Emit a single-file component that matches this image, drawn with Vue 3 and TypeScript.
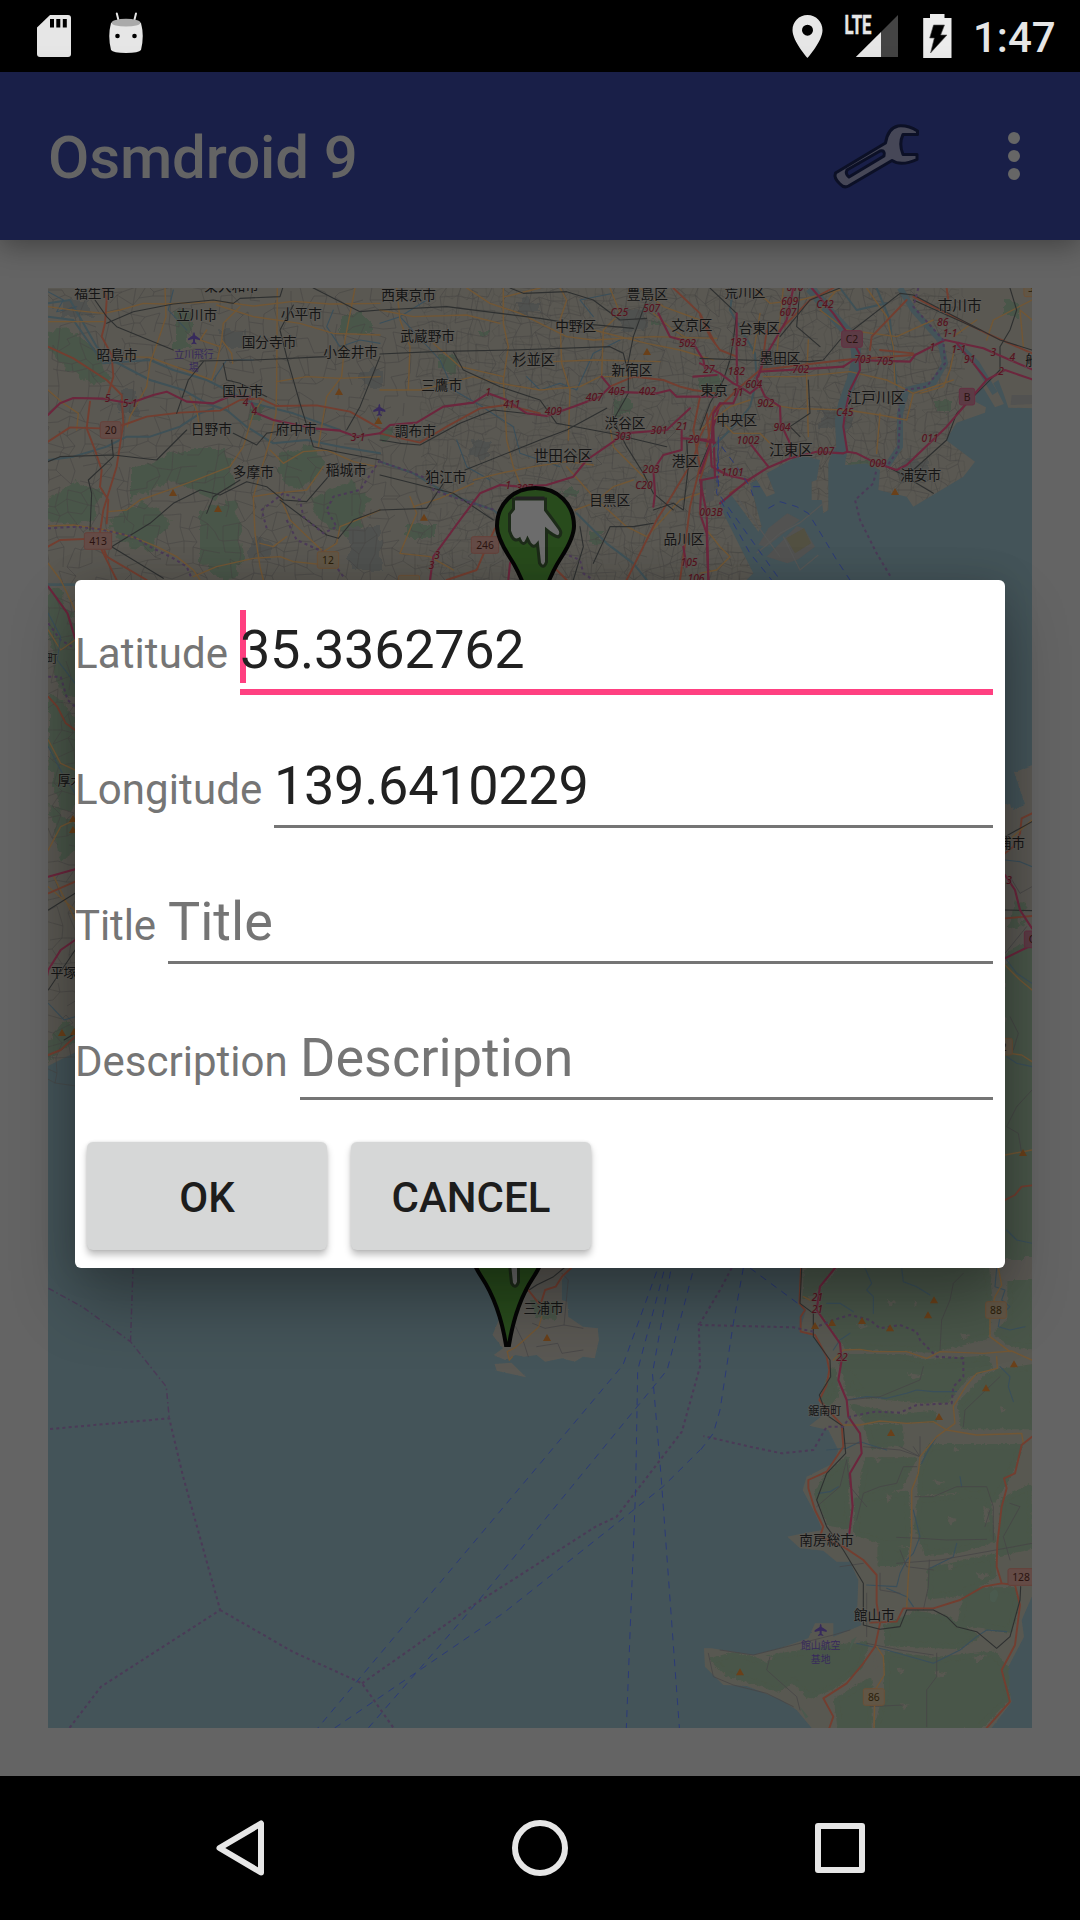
<script setup lang="ts">
import { ref } from 'vue'

type Label = [string, number, number, number?]
type Shield = [string, number, number, number, string]
type Road = [string, string]
interface Tile {
  t: string
  roads: Road[]
  places: Label[]
  fields: Label[]
  refs: Label[]
  shields: Shield[]
  peaks: [number, number][]
  planes: [number, number][]
}

interface Field { id: string; label: string; value: string; hint: string; active: boolean }

const fields = ref<Field[]>([
  { id: 'lat', label: 'Latitude', value: '35.3362762', hint: '', active: true },
  { id: 'lon', label: 'Longitude', value: '139.6410229', hint: '', active: false },
  { id: 'title', label: 'Title', value: '', hint: 'Title', active: false },
  { id: 'desc', label: 'Description', value: '', hint: 'Description', active: false },
])

// Deterministic mesh of side streets for the built-up area
function mesh(x0: number, y0: number, x1: number, y1: number, step: number, seed: number): string {
  let s = seed
  const rnd = () => {
    s = (s * 16807) % 2147483647
    return s / 2147483647
  }
  const cols = Math.ceil((x1 - x0) / step) + 1
  const rows = Math.ceil((y1 - y0) / step) + 1
  const p: [number, number][][] = []
  for (let r = 0; r < rows; r++) {
    p.push([])
    for (let c = 0; c < cols; c++) {
      p[r].push([
        Math.round(x0 + c * step + (rnd() - 0.5) * step * 0.9),
        Math.round(y0 + r * step + (rnd() - 0.5) * step * 0.9),
      ])
    }
  }
  let d = ''
  for (let r = 0; r < rows; r++) {
    for (let c = 0; c < cols; c++) {
      const [x, y] = p[r][c]
      if (c + 1 < cols && rnd() < 0.68) d += `M${x},${y}L${p[r][c + 1][0]},${p[r][c + 1][1]}`
      if (r + 1 < rows && rnd() < 0.68) d += `M${x},${y}L${p[r + 1][c][0]},${p[r + 1][c][1]}`
    }
  }
  return d
}
const streets = mesh(48, 288, 960, 600, 12, 4711)
const streetsFine = mesh(420, 288, 960, 600, 8, 977)
const streetsWest = mesh(44, 600, 84, 1070, 13, 31)

const tiles: Tile[] = [
  {
    t: 'translate(40 280) scale(.33333)',
    roads: [
      ['river', 'M24,70L90,60L130,130L170,200L215,240L330,300L430,330L500,370L560,390L620,440L700,490L800,480L900,500L1020,520'],
      ['river', 'M24,540L100,530L200,500L260,470L330,470L420,440L480,400L520,385M24,110L100,120L190,250L330,240L400,270L500,300L640,370L760,400L900,450'],
      ['river2', 'M24,35L70,60L50,95L110,80M400,30L385,90L440,150M520,300L560,240L640,240M880,90L860,140L900,200L960,180L1020,190'],
      ['sec', 'M24,80L110,92L190,100L240,90L310,70L370,72L540,65L640,78L760,64L870,72L1020,70'],
      ['sec', 'M24,125L190,125M375,24L378,110L355,180L330,250L320,320L270,410L262,440'],
      ['sec', 'M530,75L640,110L780,130L880,160L1020,165M600,80L550,130L545,180L575,220L578,250M545,180L530,250L515,300L330,232L250,230'],
      ['sec', 'M712,24L710,310L708,400L690,480L640,650L645,760L660,860L670,900M945,24L915,180L905,290L860,350L835,500'],
      ['sec', 'M710,305L800,290L900,295L1020,290M500,150L480,180L540,200M450,350L470,390L480,450'],
      ['sec', 'M24,330L70,370L115,400L110,450M205,695L260,690L300,660L400,625L480,595L570,560L610,500L640,400L670,355'],
      ['sec', 'M24,738L100,735L200,750L290,775L350,800L410,830L460,870L480,900M460,890L530,860L640,835L720,830L760,845L860,855'],
      ['sec', 'M690,510L730,550L790,515L860,510L940,545L1010,560M640,650L700,640L800,630L850,560M720,650L750,720L850,815L890,790L900,740L950,720L1020,690M660,790L700,800L740,770'],
      ['trunk', 'M24,200L100,235L200,300L245,345L250,430L230,560L190,690L175,790L230,900M192,24L200,60L195,130L185,170L215,225L220,290L205,340'],
      ['trunk', 'M24,485L90,442L180,445L250,435L320,410L420,398L540,392L600,360L660,355L710,378L830,376L930,395L1020,445'],
      ['trunk', 'M150,365L140,445L165,510L185,570L180,620L205,660L200,730M24,800L60,780L180,775L200,830L320,900'],
      ['rail', 'M165,60L200,110L230,140L400,210M200,130L280,95L400,72L520,60L580,70L600,55L720,50L728,24M760,75L720,150L740,230L780,370L820,500L890,515L1020,540M480,243L640,240L860,230M24,545L60,530L220,525L350,540L440,450'],
      ['rail', 'M150,750L155,640L145,600L220,530L215,480M215,800L330,730L400,670L480,630L540,645L620,605L680,620L730,660L800,665L865,590M500,700L520,650L600,600M215,800L370,895M550,250L560,300L600,310L680,350M820,24L960,95L1020,90M1020,230L960,380L920,450'],
      ['rail', 'M490,245L445,300L410,400M720,660L860,765L895,775L940,720L1020,690M580,460L650,495L680,460L740,450'],
      ['mot', 'M24,405L60,370L100,354L190,356L270,370L340,345L380,335L440,365L520,370L570,348L630,350M635,370L650,400L700,420L820,445L900,452L950,470L1020,460'],
      ['bound', 'M24,745L110,740L180,748L280,770L330,800L400,835L440,860L455,895M680,745L665,690L730,640L780,660L790,710L850,760L890,740L860,690L880,650L960,630L1020,540M740,720L770,780L860,820L910,890'],
    ],
    places: [['福生市', 164, 53], ['東大和市', 575, 32], ['立川市', 470, 120], ['小平市', 784, 117], ['国分寺市', 687, 200], ['小金井市', 932, 231], ['昭島市', 231, 239], ['国立市', 608, 349], ['日野市', 514, 462], ['府中市', 769, 461], ['多摩市', 640, 590], ['稲城市', 919, 585]],
    fields: [['立川飛行', 462, 233], ['場', 462, 272]],
    refs: [['5', 203, 367], ['5-1', 270, 381], ['4', 617, 378], ['4', 643, 406], ['3-1', 954, 482]],
    shields: [['20', 181, 425, 62, 'pk'], ['413', 133, 758, 82, 'pk'], ['12', 832, 815, 64, 'or']],
    peaks: [[399, 638], [534, 686], [897, 335], [1015, 422]],
    planes: [[462, 175], [1018, 390]],
  },
  {
    t: 'translate(380 280) scale(.33333)',
    roads: [
      ['river', 'M0,545L100,580L200,640L340,690L400,740M590,700L680,790L760,850L800,900'],
      ['river2', 'M60,110L180,240L220,330L290,370L400,440L420,520L540,560M440,290L480,330L540,310L590,330L640,220L720,180M230,480L260,560L330,600M640,110L600,60L700,40M0,130L60,110L140,60'],
      ['sec', 'M50,24L60,120L90,200L85,330M0,330L120,330L280,290L360,310L480,330L600,320L660,290L760,290'],
      ['sec', 'M370,24L370,130L385,200L370,300L380,480L400,560L420,610M540,24L560,60L540,120L545,250L570,330L565,480M0,90L100,110L260,105L360,130'],
      ['sec', 'M260,24L330,70L420,100L560,170L640,180L820,170L1010,175M375,50L480,24M520,245L640,240L840,245M160,190L240,260L370,290M640,150L800,190L900,210L1000,240'],
      ['sec', 'M690,24L720,100L670,150L665,290M820,100L880,150L930,180M280,600L360,580L460,560L560,545L640,555M560,560L640,650L740,740L800,770L900,660L960,640'],
      ['sec', 'M100,680L180,655L280,610M90,650L110,700L60,820L150,830L220,870M585,690L640,670L700,620L760,600M690,440L700,500L760,560L800,600M780,24L850,80L960,120'],
      ['trunk', 'M0,460L40,470L120,488L200,440L300,385L380,375L480,400M690,320L760,290L850,300L900,320L940,330L1010,340M880,24L960,100L1005,190M1005,380L960,470L940,540L880,640L830,720L790,800L740,900'],
      ['trunk', 'M200,900L290,870L320,800L345,745M960,350L940,450L960,560L930,680L920,760L900,900M560,900L520,860'],
      ['rail', 'M0,90L200,80L360,100L480,115L540,125L760,145M0,222L160,215L400,210L690,200L730,220L745,280L745,340L700,420L740,500L790,580L820,640L880,690'],
      ['rail', 'M220,215L250,270L360,320L480,360L530,430L690,460L860,500M0,480L60,490L120,495L240,430L340,390L480,405M255,570L480,480L560,450L680,385'],
      ['rail', 'M800,60L760,170L740,270M390,24L430,40L560,35L640,60L720,120L800,115M820,690L880,670L910,690L925,560L920,480M640,850L690,740L760,740L820,730M0,585L60,600L140,620L220,640L340,720M0,690L140,685L190,610M580,900L610,800L600,740'],
      ['mot', 'M0,460L30,435L110,428L190,380L280,368L324,340L380,360L440,400L500,408L580,380L660,350L690,320L665,290M690,335L830,340L870,330L890,350L1010,350'],
      ['mot', 'M150,900L160,830L240,720L300,640L360,615L420,620L500,615L580,590L620,540L700,485L730,460L860,450L930,385M835,100L870,170L940,190L970,240L975,265M905,450L905,510L850,525L820,570L825,640L820,680'],
      ['mot', 'M1000,480L905,475M1015,590L965,600L960,700L980,760L985,900M910,800L920,860M385,900L390,850L420,800M1020,370L1000,440L1005,590M940,290L1010,285'],
      ['bound', 'M0,545L90,575L150,600L160,630L260,665L345,690M550,820L600,840L610,880L640,900'],
      ['ferry', 'M1015,490L1015,560M1015,560L1015,640'],
    ],
    places: [['西東京市', 86, 61], ['豊島区', 802, 58], ['中野区', 587, 154], ['文京区', 936, 150], ['武蔵野市', 143, 183], ['杉並区', 461, 256, 43], ['新宿区', 756, 286], ['三鷹市', 185, 331], ['調布市', 106, 468], ['渋谷区', 735, 443], ['世田谷区', 549, 542, 44], ['港区', 916, 558], ['狛江市', 198, 607], ['目黒区', 689, 675], ['品川区', 912, 793]],
    fields: [],
    refs: [['C25', 718, 108], ['507', 815, 96], ['502', 922, 200], ['407', 643, 362], ['405', 710, 346], ['402', 802, 346], ['1', 324, 347], ['411', 395, 384], ['409', 520, 405], ['301', 837, 461], ['21', 905, 451], ['303', 728, 480], ['20', 941, 488], ['203', 813, 578], ['C20', 792, 628], ['1', 384, 627], ['307', 434, 635], ['3', 171, 836], ['3', 155, 866], ['105', 927, 858], ['106', 948, 907]],
    shields: [['246', 274, 770, 82, 'pk'], ['', 55, 886, 64, 'or']],
    peaks: [[132, 712], [801, 215]],
    planes: [],
  },
  {
    t: 'translate(700 280) scale(.33333)',
    roads: [
      ['arakawa', 'M330,24L400,110L465,180L470,240L455,300L430,370L420,420L425,530'],
      ['edo', 'M600,24L640,90L720,180L735,250L700,310L620,330L600,400L600,500L560,560M770,190L830,250L885,340'],
      ['river', 'M100,24L90,90L130,160L165,220L170,300L150,380L110,430L40,500M530,24L570,120L590,320M420,24L470,90L560,70'],
      ['sec', 'M160,24L210,70L300,60L420,30M190,290L300,290L450,275L560,300L640,340L760,300M410,30L360,90L440,150L590,170L700,120'],
      ['sec', 'M500,24L560,110L580,200L585,310M540,400L530,520M640,340L620,420L540,405L440,390L280,385L190,370M325,180L320,290L325,470M860,180L880,120L996,60M830,120L760,170'],
      ['sec', 'M765,200L750,270L730,320L660,340M996,120L960,90L970,200M20,750L60,800L90,830L50,870L0,880M0,450L90,380L150,360M60,420L100,460L180,460L210,490M250,24L240,120L230,230M180,100L160,220'],
      ['trunk', 'M0,105L30,170L60,210L110,230M20,500L40,400L110,330L180,270L430,240L640,225M510,210L515,170L620,60M540,210L640,220M230,160L330,60L400,24M640,50L740,100L860,160L996,220M200,150L185,270M740,24L745,60M90,640L150,600M0,600L30,500L20,400'],
      ['rail', 'M30,24L110,100L100,180L90,240L70,300L30,370L0,450M0,235L130,240L330,245L370,240L420,180L600,40L640,45L900,180L996,210M300,24L290,140L360,200M420,24L330,60L240,170'],
      ['rail', 'M640,570L740,480L770,400L860,310L900,270L900,200L930,150L950,90L930,24M325,300L330,400L270,440L300,470M540,550L600,580L700,640M640,60L840,150M0,560L30,490'],
      ['mot', 'M335,24L400,100L450,170L478,220L480,270L450,330L435,400L430,440L442,515L430,520L350,515L270,535L200,565L145,600L60,670M430,260L300,268L180,275L170,295L195,350L240,380L242,430L270,490L270,530'],
      ['mot', 'M430,260L460,240L630,245L645,225L735,180L850,205L930,240L996,268M770,190L820,250L860,300L740,440L620,555L590,570L530,550L470,520L442,515M860,300L915,270L996,298M280,24L260,120L190,240L175,290'],
      ['mot', 'M0,250L60,280L100,310L120,320L100,370L60,370L40,400L35,480L0,580M110,100L110,230L112,310M150,490L205,560M0,480L45,488M0,600L20,700L25,900M30,480L35,560L95,590M35,560L80,585L145,600M120,320L150,340L175,320'],
      ['bound', 'M655,24L640,80L730,180L735,250L680,320L615,330M592,330L600,420L595,510L560,560'],
      ['bound', 'M528,575L520,610L465,660L480,720L530,820L575,895'],
      ['ferry', 'M55,470L50,640L150,820L215,900M65,500L110,560L150,620L160,650M62,650L240,900M205,685L240,665L290,680L325,700L350,740L410,840L450,900M180,620L150,620'],
    ],
    places: [['荒川区', 135, 52], ['市川市', 779, 94, 44], ['台東区', 178, 159], ['墨田区', 240, 248], ['東京', 42, 346], ['中央区', 110, 434], ['江戸川区', 528, 369, 44], ['江東区', 273, 526, 44], ['浦安市', 662, 600], ['船', 996, 255]],
    fields: [],
    refs: [['610', 285, 32], ['609', 269, 75], ['607', 264, 108], ['C42', 375, 84], ['183', 115, 199], ['182', 109, 285], ['27', 27, 279], ['604', 161, 325], ['11', 113, 349], ['902', 197, 381], ['904', 246, 452], ['1002', 144, 492], ['1101', 97, 588], ['007', 377, 526], ['009', 534, 561], ['011', 690, 487], ['C45', 434, 409], ['702', 302, 279], ['703', 488, 248], ['705', 555, 256], ['1', 697, 214], ['86', 728, 139], ['1-1', 750, 172], ['1-1', 776, 219], ['91', 809, 250], ['3', 880, 229], ['4', 937, 244], ['2', 903, 284], ['003B', 33, 708]],
    shields: [['C2', 425, 152, 62, 'mg'], ['B', 778, 325, 46, 'mg'], ['5', 972, 0, 40, 'or']],
    peaks: [[585, 635]],
    planes: [],
  },
  {
    t: 'translate(700 1260) scale(.33333)',
    roads: [
      ['river2', 'M495,24L515,70L500,90L520,110L520,160M605,24L610,65L650,80L690,105M380,130L420,130L460,155M890,24L885,80L915,90L905,120L930,140L900,170L895,200L930,210L975,200M640,750L660,830L640,880L620,900L600,940L590,980L500,975M380,570L440,565L480,545L560,570'],
      ['river2', 'M440,420L500,410L560,415L620,400L650,390L700,395L770,395M900,320L930,350L925,380L940,425M400,270L420,240L450,220M355,700L390,695L415,680M470,1150L560,1170L700,1210L780,1170L830,1130L860,1110L920,1115M780,650L785,680M560,985L620,1010L640,1040M690,925L760,890L770,850M710,530L680,580L665,610'],
      ['lane', 'M790,40L760,70L750,120L725,180L720,270M445,420L540,410L660,360L670,320M600,560L660,590L600,570L490,560M650,620L610,620L590,670L540,680L490,700L470,780M645,710L700,710L770,680L860,680L880,740L880,840M590,910L720,900L860,875L996,850M710,1180L710,1250L680,1290L680,1400M500,1150L600,1170L700,1185M25,1180L40,1250L100,1275L200,1300L280,1340M450,1110L400,1125L300,1150L160,1185L60,1170'],
      ['lane', 'M590,832L660,835L740,840L860,838M600,870L620,920L700,930M670,1050L685,980L688,900M440,600L450,680L500,740M540,940L540,990L600,1000M640,560L660,590L660,530M790,500L795,450L900,350M510,1340L610,1335M930,730L960,740L910,830L930,900M870,750L855,800M420,920L490,910M300,1350L290,1310L200,1230L210,1190M430,550L480,550M500,1130L500,1000M350,740L420,680L440,600'],
      ['sec', 'M310,110L330,120M400,300L430,270L480,268L520,275L620,275L680,295L720,275L850,280L935,273L996,300M895,24L905,75L885,110L870,170L870,230L930,275M890,290L892,325L830,340L800,375L760,440L765,490L710,530L660,590L655,640L635,690L635,820L625,950L620,1045'],
      ['sec', 'M430,495L480,495L540,483L620,490L700,485L740,510L830,525L965,520L970,550M530,1160L550,1190L553,1245L525,1290L522,1404'],
      ['trunk', 'M303,24L298,130L315,150L302,170L302,215L345,225L380,290L388,330L380,375L358,420L425,495L430,560L380,635L325,660L325,685L345,750L370,800L360,830L430,860L490,900L530,945L530,1030L540,1090L525,1160L490,1210L440,1270L370,1315L400,1370L388,1404'],
      ['trunk', 'M510,1088L590,1085L610,1045L700,1045L780,1020L850,980L905,970L945,975L960,1035L945,1155L905,1230L930,1325L860,1404M905,970L890,920L892,850L905,740L920,685L912,655L945,640L965,555L996,530'],
      ['rail', 'M305,24L300,130L340,160L340,230L390,300L392,350L358,405L380,465L430,500L437,580L380,640L350,720L380,800L430,870L490,970L490,1095L540,1108L600,1100L620,1050L700,1050L740,1070L770,1100L830,1115L890,1165L930,1130L960,1020L962,980'],
      ['mot', 'M405,24L360,80L350,150L420,250L425,300L415,360L440,420L445,470L480,520L485,580L450,640L458,740L448,820'],
      ['bound', 'M340,205L400,180L450,165L510,180L540,205L600,195L650,215L660,240L710,290L790,295L790,350L760,380L755,430L650,435L600,458L525,455L450,470L430,500L380,500L340,570L245,580L150,560L10,528'],
      ['bound', 'M340,215L280,202L0,195M95,24L60,90L0,190'],
      ['ferry', 'M130,24L100,190L60,450L40,520L0,572M150,24L300,135'],
    ],
    places: [['鋸南町', 374, 465, 33], ['南房総市', 380, 854], ['館山市', 523, 1080]],
    fields: [['館山航空', 362, 1168], ['基地', 362, 1208]],
    refs: [['21', 352, 122], ['21', 352, 160], ['22', 426, 303]],
    shields: [['88', 857, 125, 62, 'or'], ['128', 924, 926, 78, 'pk'], ['86', 490, 1286, 63, 'or']],
    peaks: [[702, 120], [684, 165], [345, 197], [396, 188], [486, 182], [570, 204], [942, 312], [858, 384], [717, 470], [573, 518], [120, 1236]],
    planes: [[362, 1110]],
  },
  {
    t: 'translate(40 1260) scale(.42092 .33333)',
    roads: [
      ['bound thin', 'M221,24L215,245M20,85L100,140L215,245L300,380L307,475'],
      ['bound', 'M24,507L307,475L340,650L428,1050L145,1280L70,1404M428,1050L600,1175L765,1270L840,1404M765,1270L1030,1035L1320,800L1370,770L1525,515L1568,320L1565,190'],
      ['ferry', 'M1465,35L1385,315L660,1404M1482,35L1420,330L1415,690L1393,1404M1498,35L1455,340L1475,640L1519,1404M1550,40L1490,330L1030,1040L780,1404M700,1404L1100,1060L1405,755L1480,680L1568,570'],
      ['lane', 'M1170,190L1200,205L1245,195L1290,205M1130,200L1150,250L1160,290M1180,260L1230,250L1240,280L1290,270M1245,195L1255,60L1240,40'],
      ['sec', 'M1192,170L1185,200L1155,235L1130,262L1110,275L1115,300L1122,290'],
      ['rail', 'M1245,24L1220,50L1180,75L1150,100'],
      ['trunk', 'M1262,24L1240,50L1225,80L1200,90L1190,130M1160,90L1185,130'],
    ],
    places: [],
    fields: [],
    refs: [],
    shields: [],
    peaks: [],
    planes: [],
  },
  {
    t: 'translate(40 560) scale(.34438 .33333)',
    roads: [
      ['sec', 'M24,10L60,60L102,150M24,210L60,270L102,240M24,540L60,610L102,630M24,870L60,800L102,780M24,980L102,1050M40,950L102,1080'],
      ['mot', 'M24,80L80,160L102,235M24,950L102,928M102,1140L60,1170L24,1230L10,1300'],
      ['trunk', 'M24,410L50,440L75,490L102,510M24,1000L102,965M102,1430L60,1470L24,1485'],
      ['rail', 'M24,1050L102,1000M24,1290L102,1170M70,1440L102,1420'],
      ['bound', 'M24,190L60,240L102,265M24,350L60,350L80,420L102,440'],
      ['river2', 'M24,160L60,230L50,300L102,370M24,560L70,650L102,700M24,1330L70,1380L102,1370'],
    ],
    places: [],
    fields: [],
    refs: [],
    shields: [],
    peaks: [],
    planes: [],
  },
  {
    t: 'translate(560 560) scale(.33333)',
    roads: [
      ['trunk', 'M1416,760L1385,775L1380,820L1360,860L1335,880M1335,1920L1365,1905L1385,1880L1416,1876M1335,1075L1416,1068'],
      ['sec', 'M1335,850L1416,780M1335,1215L1380,1260L1416,1290M1335,1478L1385,1485L1416,1505M1335,1785L1416,1770'],
      ['rail', 'M1335,830L1416,785M1335,1050L1416,1052'],
      ['mot', 'M1335,945L1365,990L1380,1050L1416,1105M1335,1195L1416,1155'],
      ['river2', 'M1335,900L1380,905L1416,920M1340,1200L1370,1240L1416,1270M1340,1490L1370,1510L1416,1520M1340,2010L1370,2040L1416,2050'],
      ['lane', 'M1350,950L1380,1000L1416,980M1335,1180L1400,1100M1350,1370L1375,1420L1360,1470M1416,1590L1370,1640L1340,1700L1375,1720L1385,1780'],
    ],
    places: [['浦市', 1355, 864, 40]],
    fields: [],
    refs: [['3', 1347, 972]],
    shields: [['C', 1393, 1113, 46, 'mg'], ['2', 1305, 1435, 52, 'or']],
    peaks: [[1389, 1778]],
    planes: [],
  },
]

const pageLabels: Label[] = [
  ['三浦市', 543.5, 1313, 13.3],
  ['平塚市', 70, 976.5, 13],
  ['厚木市', 77, 784.5, 13],
  ['町', 52, 663, 11],
]
const pins = [{ x: 535.5, y: 486 }, { x: 507.5, y: 1206 }]
</script>

<template>
  <div class="screen">
    <header class="status">
      <svg class="left-icons" width="150" height="72" viewBox="0 0 150 72">
        <path d="M50 15H68a3 3 0 0 1 3 3V54a3 3 0 0 1-3 3H40a3 3 0 0 1-3-3V27.500Z" fill="#e6e6e6" />
        <path d="M50 19h4v8.500h-4zM56.300 19h4v8.500h-4zM62.800 19h4v8.500h-4z" fill="#000" />
        <path d="M116.800 13.500l2 8M136 13.500l-2 8" stroke="#e6e6e6" stroke-width="2" stroke-linecap="round" />
        <path d="M111 23Q126 17 141 23Q144.500 36 141 50Q139 53 126 53Q113 53 111 50Q107.500 36 111 23Z" fill="#e6e6e6" />
        <ellipse cx="126" cy="22.700" rx="14.500" ry="3.900" fill="#aaa" />
        <circle cx="117.500" cy="36" r="2.300" /><circle cx="134.500" cy="36" r="2.300" />
      </svg>
      <div class="right-icons">
        <svg width="180" height="72" viewBox="780 0 180 72">
          <path d="M807.500 15C799 15 792.500 21.700 792.500 30.200C792.500 41 807.500 58 807.500 58S822.500 41 822.500 30.200C822.500 21.700 816 15 807.500 15ZM807.500 24.700a5.500 5.500 0 1 1 0 11a5.500 5.500 0 0 1 0-11Z" fill="#e6e6e6" fill-rule="evenodd" />
          <path d="M898 15V57H881V32Z" fill="#444" />
          <path d="M881 32V57H855.800Z" fill="#e6e6e6" />
          <text x="844.500" y="33.500" class="lte" textLength="27" lengthAdjust="spacingAndGlyphs">LTE</text>
          <path d="M930 14H944.500V18H951.500V58H923.200V18H930Z" fill="#ececec" />
          <path d="M933.500 25H944.500L940.700 35H947L930.500 53L934.300 38H929.700Z" fill="#000" stroke="#555" stroke-width=".6" />
        </svg>
        <span class="clock">1:47</span>
      </div>
    </header>

    <div class="appbar">
      <h1>Osmdroid 9</h1>
      <svg width="220" height="168" viewBox="820 72 220 168">
        <g fill="#464757" stroke="#0c1026" stroke-width="3" stroke-linejoin="round">
          <path d="M835.500 173L885.500 143Q888 128 898 126Q908 125 917.500 131V134.500H903Q898.500 144 903 154.500H917V159.500Q901 166.500 892 160.500L848.500 186Q844 188.500 840 184Q833.500 178 835.500 173ZM849 177L884 156Q885.500 150 880 151L847 170Q845 174 849 177Z" fill-rule="evenodd" />
        </g>
        <g fill="#666"><circle cx="1014" cy="138" r="6" /><circle cx="1014" cy="156" r="6" /><circle cx="1014" cy="174" r="6" /></g>
      </svg>
    </div>

    <main class="content">
      <svg class="map" width="984" height="1440" viewBox="48 288 984 1440">
        <defs>
          <filter id="rough" x="-5%" y="-5%" width="110%" height="110%">
            <feTurbulence type="fractalNoise" baseFrequency=".09" numOctaves="3" seed="5" result="n" />
            <feDisplacementMap in="SourceGraphic" in2="n" scale="13" xChannelSelector="R" yChannelSelector="G" />
          </filter>
          <filter id="coast" x="-5%" y="-5%" width="110%" height="110%">
            <feTurbulence type="fractalNoise" baseFrequency=".15" numOctaves="2" seed="9" result="n" />
            <feDisplacementMap in="SourceGraphic" in2="n" scale="5" xChannelSelector="R" yChannelSelector="G" />
          </filter>
          <clipPath id="north">
            <path transform="translate(700 280) scale(.33333)" d="M-2000,0L1000,0L1000,385L925,383L912,345L895,300L880,310L912,372L885,382L845,315L828,332L826,365L858,382L855,398L770,428L738,480L825,545L790,590L640,680L620,650L535,630L540,570L500,550L435,555L440,515L400,500L385,550L385,690L370,700L365,660L335,660L335,605L350,600L360,540L300,525L200,580L225,640L200,650L170,600L150,610L185,740L175,755L90,640L60,670L70,700L160,880L130,910L-2000,910Z" />
          </clipPath>
        </defs>
        <rect x="48" y="288" width="984" height="1440" fill="#445459" />

        <!-- Kanto plain and Tokyo bay shore -->
        <g clip-path="url(#north)">
          <rect x="48" y="288" width="984" height="300" fill="#5a5852" />
          <g filter="url(#rough)" class="wood">
            <path d="M48 330L70 328L100 352L112 380L95 385L70 372L48 350ZM48 500L75 480L100 490L95 520L70 525L48 520ZM130 470L180 450L225 450L235 480L215 500L170 480L130 500ZM280 455L310 445L325 465L300 490L280 480ZM200 510L235 500L245 560L230 585L200 560ZM175 310h14v38h-14zM340 315h30v18h-30zM310 500L350 480L370 500L350 540L320 520ZM110 520L145 500L170 520L150 550L115 540Z" />
            <path d="M440 355h16v16h-16zM615 400h16v14h-16zM700 375h20v18h-20zM405 525h30v14h-30zM560 490h20v8h-20zM935 400h16v12h-16zM1005 300h14v18h-14zM250 405h12v14h-12zM380 430h12v10h-12zM480 330h9v7h-9zM650 320h9v7h-9zM590 530h12v14h-12zM845 460h26v10h-26z" />
          </g>
          <g filter="url(#rough)" fill="#50514f">
            <path d="M60 300h30v16h-30zM220 330h24v16h-24zM120 390h18v24h-18zM250 540h22v20h-22zM360 370h24v18h-24zM470 440h20v18h-20zM620 310h26v20h-26zM760 350h22v20h-22zM820 410h32v18h-32zM900 460h28v22h-28zM520 300h20v12h-20zM350 525h30v45h-30zM700 470h18v22h-18z" />
          </g>
          <path :d="streets" class="street" />
          <path :d="streetsFine" class="street fine" />
        </g>
        <path transform="translate(700 280) scale(.33333)" fill="#525251" d="M262,700L300,720L200,800L175,795L205,745ZM290,738L312,745L345,800L295,838L262,850L200,830ZM935,345L996,345V372L932,375ZM18,590L42,590V660L18,670Z" />
        <path transform="translate(700 280) scale(.33333)" fill="#525041" d="M258,775L312,745L333,790L285,820Z" />
        <path transform="translate(700 280) scale(.33333)" d="M170,820L240,760L300,728L370,670M110,650L160,720L240,830M250,770L300,870L355,825" class="lane-light" />

        <!-- Western strip -->
        <path d="M40 586H90V1045L48 1066Z" fill="#5a5852" />
        <path d="M48 586L62 590L80 640V700L60 690L48 640ZM48 690L62 700L80 730V800L60 815L48 760ZM48 800L80 830V850L60 860ZM48 1040L66 1020L80 1030V1040L48 1060Z" class="wood" filter="url(#rough)" />
        <path :d="streetsWest" class="street" />

        <!-- Miura peninsula -->
        <path transform="translate(40 1260) scale(.42092 .33333)" fill="#5a5953" filter="url(#coast)" d="M1150,20L1262,20L1240,60L1240,120L1253,125L1255,170L1290,200L1325,205L1328,240L1318,295L1290,290L1270,305L1240,295L1200,305L1180,285L1150,290L1130,285L1105,300L1078,285L1100,265L1075,225L1090,180L1120,100ZM1080,312L1120,308L1155,352L1130,345L1085,332Z" />
        <path d="M530 1300L560 1302L556 1320L535 1318Z" class="wood" filter="url(#coast)" />

        <!-- Boso peninsula -->
        <g transform="translate(700 1260) scale(.33333)">
          <path fill="#595851" filter="url(#coast)" d="M303,0L298,130L318,150L298,215L340,228L380,290L385,340L355,420L370,465L328,497L385,510L415,570L400,610L320,650L308,690L345,760L368,810L300,822L262,830L300,865L370,872L410,905L450,905L475,960L472,1040L485,1095L450,1110L400,1130L400,1090L345,1090L325,1135L240,1165L160,1185L100,1175L35,1165L12,1165L15,1220L70,1275L140,1278L240,1318L290,1350L340,1410L870,1410L935,1325L915,1240L972,1130L965,1080L1000,1000L1000,0Z" />
          <g class="wood dense" filter="url(#rough)">
            <path d="M320,30L390,30L345,90L315,110ZM420,30L860,30L870,120L860,230L700,270L440,260L370,160L360,100ZM930,30L1000,30L1000,260L940,255L890,220L930,180ZM420,290L600,290L680,305L860,295L870,320L800,345L740,420L640,420L450,400ZM400,330L410,400L380,440L370,410ZM900,335L1000,320L1000,500L790,500L780,430L860,350ZM500,500L600,500L605,550L520,560ZM460,440L600,470L700,460L700,480L500,480ZM500,600L640,600L600,680L480,720ZM690,560L960,560L930,640L900,690L880,720L770,690L660,700L660,640ZM380,650L440,600L440,720L445,800L390,790L350,700ZM470,720L620,700L625,850L560,850L470,820ZM660,720L860,700L880,840L780,870L680,880L650,800ZM910,720L990,680L990,860L900,880ZM540,860L620,870L600,910L540,910ZM690,930L880,890L880,950L780,1000L690,1010ZM650,1060L740,1075L830,1130L780,1160L560,1150L560,1100ZM800,990L940,990L950,1030L930,1110L780,1090ZM560,1180L700,1200L880,1180L920,1230L920,1320L840,1400L530,1400L560,1300ZM360,1170L500,1150L480,1220L400,1280L330,1310L280,1260L230,1290L180,1270L80,1240L40,1200L100,1185L180,1200L220,1190ZM410,1320L510,1260L510,1400L420,1400ZM450,340L480,380L440,390Z" />
          </g>
          <path d="M445,1180L470,1130L455,1140ZM870,1000q20,-25 25,5q-10,35 -25,15ZM300,1340l25,30 -8,5z" fill="#4a5a4e" />
          <!-- Valleys cut into the hills -->
          <path filter="url(#rough)" fill="#595851" d="M560,120l30,6-20,12zM470,190l40,8-30,10zM620,340l50,6-30,12zM520,590l24,8-10,12zM700,660l36,8-20,10zM850,740l16,6v40l-14,4zM760,560l20,8-14,8zM780,220l30,8-22,10zM900,440l20,10-16,8zM700,1230l40,12-26,12zM820,1190l40,-4-30,24zM590,1220l24,10-12,14zM160,1185l60,4-20,20zM740,910l24,8-16,14zM600,1330l30,4-20,12zM560,700l16,10-14,20zM640,120l12,6-6,16zM740,770l30,6-16,20zM830,940l40,4-30,16zM520,1180l14,40-12,8z" />
        </g>

        <!-- Eastern strip -->
        <path d="M1014 772L1040 762V1280H1000V805L1011 803L1013 810L1025 805Z" fill="#5a5953" filter="url(#coast)" />
        <path d="M1005 955L1040 935V1260H1000V1090ZM1015 900L1026 905L1020 930L1010 925Z" class="wood" filter="url(#rough)" />

        <g v-for="(tile, i) in tiles" :key="i" :transform="tile.t">
          <path v-for="(r, j) in tile.roads" :key="j" :d="r[1]" :class="['road', r[0]]" />
        </g>
        <g v-for="(tile, i) in tiles" :key="'l' + i" :transform="tile.t">
          <path v-for="(p, j) in tile.peaks" :key="'p' + j" :d="`M${p[0]} ${p[1] - 11}l12 21h-24z`" fill="#6a4019" />
          <path v-for="(p, j) in tile.planes" :key="'a' + j" :transform="`translate(${p[0]} ${p[1]})`" d="M0-19Q3-17 3-9L18 1V6L3 2V11L8 16V18L0 16L-8 18V16L-3 11V2L-18 6V1L-3-9Q-3-17 0-19Z" fill="#372a5c" />
          <g v-for="(s, j) in tile.shields" :key="'s' + j">
            <rect :x="s[1]" :y="s[2]" :width="s[3]" height="50" rx="6" :class="['shield', s[4]]" />
            <text :x="s[1] + s[3] / 2" :y="s[2] + 37" :class="['shield-text', s[4]]">{{ s[0] }}</text>
          </g>
          <text v-for="(r, j) in tile.refs" :key="'r' + j" :x="r[1]" :y="r[2]" class="ref">{{ r[0] }}</text>
          <text v-for="(f, j) in tile.fields" :key="'f' + j" :x="f[1]" :y="f[2]" class="airfield">{{ f[0] }}</text>
          <text v-for="(c, j) in tile.places" :key="'c' + j" :x="c[1]" :y="c[2]" :font-size="c[3] ?? 41" class="place">{{ c[0] }}</text>
        </g>
        <path d="M62 1029l4 7h-8zM74 1028l4 7h-8zM73 815l4 7h-8zM73 826l4 7h-8zM547 1334l4 7h-8z" fill="#6a4019" />
        <text v-for="(l, i) in pageLabels" :key="'g' + i" :x="l[1]" :y="l[2]" :font-size="l[3]" class="place small">{{ l[0] }}</text>

        <g v-for="(p, i) in pins" :key="'pin' + i" :transform="`translate(${p.x} ${p.y})`">
          <path d="M0 2C-22 2-38.500 18-38.500 40C-38.500 50-33 60-26 71C-16 86-7 105-1.500 139H1.500C7 105 16 86 26 71C33 60 38.500 50 38.500 40C38.500 18 22 2 0 2Z" fill="#284b1c" stroke="#050505" stroke-width="4" />
          <path d="M-22 13H10V24Q17 33 24 43Q27 48 23 51Q18 50 11 44L11 76Q8 84 4 77L2 58Q-2 63-6 57L-8 53Q-12 62-16 53Q-21 56-24 50L-26 45V28L-22 23Z" fill="#6c6c6c" stroke="#1c2a18" stroke-width="3" />
          <path d="M-20 12H9" stroke="#222" stroke-width="3" />
        </g>
      </svg>
    </main>

    <nav class="navbar">
      <svg width="1080" height="144" viewBox="0 1776 1080 144" fill="none" stroke="#e6e6e6" stroke-width="6" stroke-linejoin="round">
        <path d="M261 1823.500V1872.500L219.500 1848Z" />
        <circle cx="540" cy="1848" r="25" />
        <rect x="818" y="1826" width="44" height="44" />
      </svg>
    </nav>

    <div class="overlay">
      <form class="dialog" @submit.prevent>
        <div v-for="f in fields" :key="f.id" :class="['row', { active: f.active }]">
          <label :for="f.id" :class="f.id">{{ f.label }}</label>
          <div class="entry">
            <i v-if="f.active" class="caret" />
            <input :id="f.id" v-model="f.value" :placeholder="f.hint" type="text" />
          </div>
        </div>
        <div class="actions">
          <button type="button">OK</button>
          <button type="button">CANCEL</button>
        </div>
      </form>
    </div>
  </div>
</template>

<style>
body { margin: 0; background: #000; }
</style>

<style scoped>
.screen { position: relative; width: 1080px; height: 1920px; display: flex; flex-direction: column; overflow: hidden; background: #646464; font-family: Roboto, "Noto Sans CJK JP", sans-serif; }
svg { display: block; }
.status { height: 72px; background: #000; display: flex; justify-content: space-between; flex: none; }
.right-icons { display: flex; padding-right: 26px; }
.clock { width: 81px; margin-left: 13px; color: #e6e6e6; font-size: 42px; font-weight: 500; line-height: 75px; text-align: right; white-space: nowrap; }
.right-icons svg { flex: none; }
.lte { font: 700 26px Roboto, sans-serif; fill: #e6e6e6; stroke: #e6e6e6; stroke-width: .5px; }
.appbar { height: 168px; flex: none; background: #191f48; display: flex; justify-content: space-between; padding: 0 40px 0 48px; box-shadow: 0 6px 26px rgba(0, 0, 0, .34); z-index: 1; }
h1 { margin: 0; color: #646464; font-size: 60px; font-weight: 500; line-height: 171px; letter-spacing: -.12px; }
.content { flex: 1; padding: 48px; min-height: 0; }
.map { overflow: hidden; }
.navbar { height: 144px; flex: none; background: #000; z-index: 3; }

.wood { fill: #4a5648; }
.wood.dense { stroke: #4a5648; stroke-width: 16; stroke-linejoin: round; }
.street { fill: none; stroke: #484744; stroke-width: .8; opacity: .75; }
.street.fine { stroke-width: .6; opacity: .45; }
.lane-light { fill: none; stroke: #555655; stroke-width: 4; }
.road { fill: none; vector-effect: non-scaling-stroke; stroke-linejoin: round; stroke-linecap: round; }
.river { stroke: #3f5157; stroke-width: 2; }
.river2 { stroke: #3a4f5b; stroke-width: 1.1; }
.arakawa { stroke: #445459; stroke-width: 10; stroke-linecap: butt; }
.edo { stroke: #445459; stroke-width: 6; stroke-linecap: butt; }
.sec { stroke: #725735; stroke-width: 1.4; }
.trunk { stroke: #733e30; stroke-width: 1.9; }
.mot { stroke: #6c263d; stroke-width: 2.1; }
.rail { stroke: #2e3030; stroke-width: 1.1; }
.lane { stroke: #464546; stroke-width: .8; }
.bound { stroke: #4b3a57; stroke-width: 2; stroke-dasharray: 3 3.200; stroke-linecap: butt; }
.bound.thin { stroke-width: 1.400; stroke-dasharray: 6 3 1.500 3; }
.ferry { stroke: #2b3a78; stroke-width: 1; stroke-dasharray: 7 6; stroke-linecap: butt; }
.ref { font: italic 500 31px "Noto Sans", sans-serif; fill: #561320; text-anchor: middle; paint-order: stroke; stroke: #5c5650; stroke-width: 4px; stroke-opacity: .6; }
.place { font-family: "Noto Sans CJK JP", sans-serif; fill: #151515; text-anchor: middle; paint-order: stroke; stroke: #5f5d59; stroke-width: 5px; stroke-opacity: .6; }
.place.small { stroke-width: 1.500px; }
.airfield { font: 29.500px "Noto Sans CJK JP", sans-serif; fill: #372a5c; text-anchor: middle; }
.shield { stroke-width: 3; }
.shield.pk { fill: #644b46; stroke: #66403a; }
.shield.or { fill: #615646; stroke: #6c5036; }
.shield.mg { fill: #5c3b45; stroke: #642f42; }
.shield-text { font: 31px "Noto Sans", sans-serif; fill: #2a1310; text-anchor: middle; }
.shield-text.or { fill: #2a1e0a; }

.overlay { position: absolute; inset: 72px 0 144px; display: grid; place-items: center; z-index: 2; }
.dialog { width: 930px; height: 688px; background: #fff; border-radius: 6px; box-shadow: 0 34px 64px rgba(0, 0, 0, .3), 0 0 36px rgba(0, 0, 0, .14); }
.row { display: flex; align-items: flex-start; height: 136px; padding-right: 12px; box-sizing: border-box; }
.row label { flex: none; padding-top: 49px; font-size: 42px; line-height: 49px; color: #757575; white-space: nowrap; }
label.lat { width: 153px; letter-spacing: .1px; }
label.lon { width: 187px; letter-spacing: .1px; }
label.title { width: 81px; letter-spacing: -.1px; }
label.desc { width: 213px; }
.entry { position: relative; flex: 1; margin-left: 12px; }
.entry input { position: relative; display: block; box-sizing: border-box; width: 100%; height: 112px; padding: 38px 0 8px; margin: 0; border: 0; border-bottom: 3px solid #757575; border-radius: 0; outline: 0; background: transparent; font: 54px/63px Roboto, sans-serif; letter-spacing: -.3px; color: #212121; }
.entry input::placeholder { color: #757575; opacity: 1; letter-spacing: 0; }
.active input { height: 115px; border-bottom: 6px solid #ff4081; }
.caret { position: absolute; left: 0; top: 30px; width: 6px; height: 73px; background: #ff4081; }
.actions { display: flex; gap: 24px; padding: 18px 12px; }
.actions button { width: 240px; height: 108px; padding: 3px 0 0; border: 0; border-radius: 6px; background: #d6d7d7; color: #1d1d1d; font: 500 42px Roboto, sans-serif; box-shadow: 0 5px 7px rgba(0, 0, 0, .25), 0 0 3px rgba(0, 0, 0, .12); }
</style>
